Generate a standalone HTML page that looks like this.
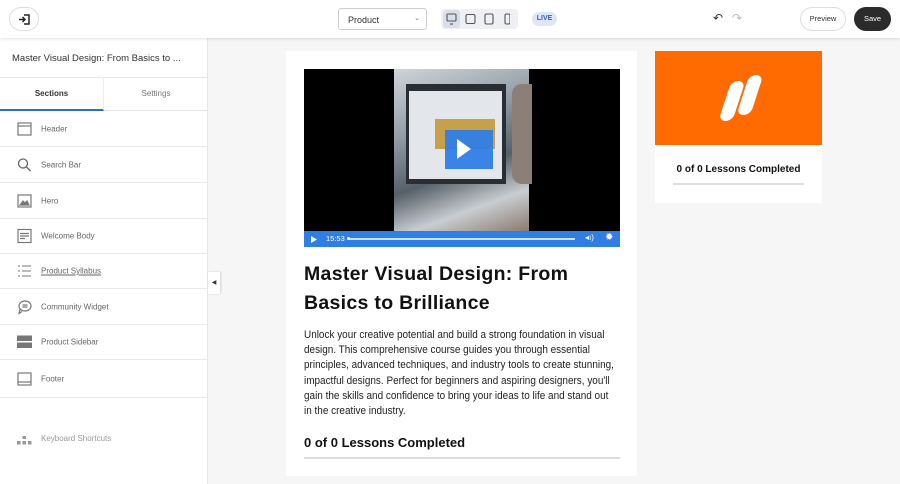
<!DOCTYPE html>
<html><head><meta charset="utf-8"><style>
*{box-sizing:border-box;margin:0;padding:0}
body{width:900px;height:484px;overflow:hidden;background:#f6f6f6;font-family:"Liberation Sans",sans-serif;position:relative}
.top{position:absolute;left:0;top:0;width:900px;height:38px;background:#fff;box-shadow:0 1px 3px rgba(0,0,0,.12);z-index:2}
.abs{position:absolute}
.left{position:absolute;left:0;top:38px;width:208px;height:446px;background:#fff;border-right:1px solid #e6e6e6}
.item{position:absolute;left:0;width:208px;height:35px;border-bottom:1px solid #e8e8e8;font-size:8px;color:#666}
.item span{position:absolute;left:41px;top:50%;transform:translateY(-50%)}
.item svg{position:absolute;left:17px;top:50%;transform:translateY(-50%)}
.card{position:absolute;left:286px;top:51px;width:351px;height:425px;background:#fff}
h1{position:absolute;left:304px;top:260px;width:330px;font-size:19.5px;line-height:29px;font-weight:bold;color:#111;letter-spacing:.3px}
p{position:absolute;left:304px;top:328px;width:360px;font-size:11px;line-height:15.2px;color:#222;white-space:nowrap;transform:scaleX(.905);transform-origin:0 0}
</style></head><body>
<div class="top">
 <div class="abs" style="left:9px;top:7px;width:30px;height:24px;border:1px solid #ddd;border-radius:12px;background:#fff">
  <svg class="abs" style="left:8px;top:5px" width="13" height="13" viewBox="0 0 13 13" fill="none" stroke="#222" stroke-width="1.5"><path d="M6 2h5v9H6M1 6.5h6M4.5 4l2.5 2.5L4.5 9"/></svg></div>
 <div class="abs" style="left:338px;top:8px;width:89px;height:22px;border:1px solid #ccc;border-radius:3px;font-size:9px;color:#333;padding:6px 0 0 9px">Product<span style="position:absolute;right:6px;top:5px;font-size:7px;color:#777">⌄</span></div>
 <div class="abs" style="left:441px;top:9px;width:77px;height:20px;background:#eef0f4;border-radius:4px"></div>
 <div class="abs" style="left:443px;top:10px;width:17px;height:18px;background:#d9deea;border-radius:3px"></div>
 <svg class="abs" style="left:446px;top:13px" width="64" height="12" viewBox="0 0 64 12" fill="none" stroke="#555" stroke-width="1.1"><rect x="1" y="1" width="9" height="7" rx="1"/><path d="M4 11h3"/><rect x="20" y="1.5" width="9" height="9" rx="1.5"/><rect x="39" y="1" width="8" height="10" rx="1.5"/><rect x="59" y="1" width="5" height="10" rx="1.5"/></svg>
 <div class="abs" style="left:532px;top:12px;width:25px;height:14px;background:#dde6f8;border-radius:7px;font-size:7px;font-weight:bold;color:#3b5bb5;text-align:center;line-height:14px">LIVE</div>
 <div class="abs" style="left:713px;top:11px;font-size:12px;color:#333">↶</div>
 <div class="abs" style="left:732px;top:11px;font-size:12px;color:#bbb">↷</div>
 <div class="abs" style="left:800px;top:7px;width:46px;height:24px;border:1px solid #ddd;border-radius:12px;font-size:7.5px;color:#333;text-align:center;line-height:22px">Preview</div>
 <div class="abs" style="left:854px;top:7px;width:37px;height:24px;background:#2b2b2b;border-radius:12px;font-size:7.5px;color:#fff;text-align:center;line-height:24px">Save</div>
</div>
<div class="left">
 <div class="abs" style="left:12px;top:15px;font-size:9.5px;color:#333">Master Visual Design: From Basics to ...</div>
 <div class="abs" style="left:0;top:39px;width:208px;height:34px;border-top:1px solid #e6e6e6;border-bottom:1px solid #e6e6e6"></div>
 <div class="abs" style="left:0;top:39px;width:104px;height:34px;border-right:1px solid #eee;font-size:8px;font-weight:bold;color:#333;text-align:center;line-height:34px;border-bottom:2px solid #2a6fd0">Sections</div>
 <div class="abs" style="left:104px;top:39px;width:104px;height:34px;font-size:8px;color:#777;text-align:center;line-height:34px">Settings</div>
 <div class="item" style="top:74px"><svg width="15" height="14" fill="none" stroke="#777" stroke-width="1.2"><rect x="1" y="1" width="13" height="12"/><path d="M1 4h13"/></svg><span>Header</span></div>
 <div class="item" style="top:110px"><svg width="15" height="15" fill="none" stroke="#666" stroke-width="1.3"><circle cx="6" cy="6" r="4.5"/><path d="M9.5 9.5l4 4"/></svg><span>Search Bar</span></div>
 <div class="item" style="top:146px"><svg width="15" height="14" fill="none" stroke="#777" stroke-width="1.2"><rect x="1" y="1" width="13" height="12"/><path d="M3 11l3-4 2 2 2-2 2 4z" fill="#777"/></svg><span>Hero</span></div>
 <div class="item" style="top:181px"><svg width="15" height="15" fill="none" stroke="#777" stroke-width="1.2"><rect x="1" y="1" width="13" height="13"/><path d="M3 5h9M3 7.5h9M3 10h5"/></svg><span>Welcome Body</span></div>
 <div class="item" style="top:216px"><svg width="15" height="14" fill="none" stroke="#777" stroke-width="1"><path d="M5 2h9M5 7h9M5 12h9M1 2h2M1 7h2M1 12h2"/></svg><span style="text-decoration:underline">Product Syllabus</span></div>
 <div class="item" style="top:252px"><svg width="15" height="15" fill="none" stroke="#777" stroke-width="1.2"><ellipse cx="8" cy="6.5" rx="6" ry="5"/><path d="M3 10l-1 4 3-2M5.5 5.5h5M5.5 7.5h5"/></svg><span>Community Widget</span></div>
 <div class="item" style="top:287px"><svg width="15" height="13"><rect x="0" y="0" width="15" height="5.5" fill="#777"/><rect x="0" y="7" width="15" height="5.5" fill="#777"/></svg><span>Product Sidebar</span></div>
 <div class="item" style="top:323px;height:37px"><svg width="15" height="14" fill="none" stroke="#777" stroke-width="1.2"><rect x="1" y="1" width="13" height="12"/><path d="M1 10h13"/></svg><span>Footer</span></div>
 <div class="abs" style="left:17px;top:395px"><svg width="15" height="10" fill="#999"><rect x="5.5" y="0" width="3.5" height="3"/><rect x="0" y="5" width="3.5" height="3.5"/><rect x="5.5" y="5" width="3.5" height="3.5"/><rect x="11" y="5" width="3.5" height="3.5"/></svg></div>
 <div class="abs" style="left:41px;top:396px;font-size:8px;color:#999">Keyboard Shortcuts</div>
</div>
<div class="abs" style="left:208px;top:272px;width:12px;height:22px;background:#fff;box-shadow:1px 0 2px rgba(0,0,0,.15);font-size:6px;line-height:22px;text-align:center;color:#333">◀</div>
<div class="card"></div>
<div class="abs" style="left:304px;top:69px;width:316px;height:178px;background:#000;overflow:hidden">
 <div class="abs" style="left:90px;top:0;width:135px;height:162px;background:linear-gradient(160deg,#cfd4d8 0%,#9aa3ab 30%,#556068 60%,#c9cdd1 80%,#8a7b70 100%)"></div>
 <div class="abs" style="left:102px;top:15px;width:100px;height:100px;background:#2a2e33"></div>
 <div class="abs" style="left:105px;top:22px;width:93px;height:88px;background:#e3e6ea"></div>
 <div class="abs" style="left:131px;top:50px;width:60px;height:30px;background:#c9a04a"></div>
 <div class="abs" style="left:208px;top:15px;width:20px;height:100px;background:#8b7f78;border-radius:10px 0 0 10px"></div>
 <div class="abs" style="left:141px;top:61px;width:48px;height:39px;background:#2f7ee6;opacity:.95"></div>
 <svg class="abs" style="left:153px;top:70px" width="14" height="20"><path d="M0 0l14 10L0 20z" fill="#fff"/></svg>
 <div class="abs" style="left:0;top:162px;width:316px;height:16px;background:#2f7ee6"></div>
 <svg class="abs" style="left:7px;top:167px" width="6" height="7"><path d="M0 0l6 3.5L0 7z" fill="#fff"/></svg>
 <div class="abs" style="left:22px;top:165px;font-size:7.5px;color:#fff">15:53</div>
 <div class="abs" style="left:44px;top:169px;width:227px;height:1.5px;background:#cfe0fb"></div>
 <div class="abs" style="left:43px;top:168px;width:3px;height:3px;border-radius:2px;background:#fff"></div>
 <div class="abs" style="left:281px;top:164px;font-size:8px;color:#fff">◂ı)</div>
 <div class="abs" style="left:301px;top:163px;font-size:10px;color:#fff">✹</div>
</div>
<h1>Master Visual Design: From<br>Basics to Brilliance</h1>
<p>Unlock your creative potential and build a strong foundation in visual<br>design. This comprehensive course guides you through essential<br>principles, advanced techniques, and industry tools to create stunning,<br>impactful designs. Perfect for beginners and aspiring designers, you'll<br>gain the skills and confidence to bring your ideas to life and stand out<br>in the creative industry.</p>
<div class="abs" style="left:304px;top:435px;font-size:13px;font-weight:bold;color:#111">0 of 0 Lessons Completed</div>
<div class="abs" style="left:304px;top:457px;width:316px;height:2px;background:#ddd"></div>
<div class="abs" style="left:655px;top:51px;width:167px;height:152px;background:#fff"></div>
<div class="abs" style="left:655px;top:51px;width:167px;height:94px;background:#ff6b00"></div>
<svg class="abs" style="left:714px;top:73px" width="52" height="50"><rect x="6" y="8" width="14" height="40" rx="7" fill="#fff" transform="skewX(-18) translate(14,0)"/><rect x="26" y="2" width="14" height="40" rx="7" fill="#fff" transform="skewX(-18) translate(10,0)"/></svg>
<div class="abs" style="left:655px;top:164px;width:167px;text-align:center;font-size:10px;font-weight:bold;color:#111">0 of 0 Lessons Completed</div>
<div class="abs" style="left:673px;top:183px;width:131px;height:2px;background:#ddd"></div>
</body></html>
